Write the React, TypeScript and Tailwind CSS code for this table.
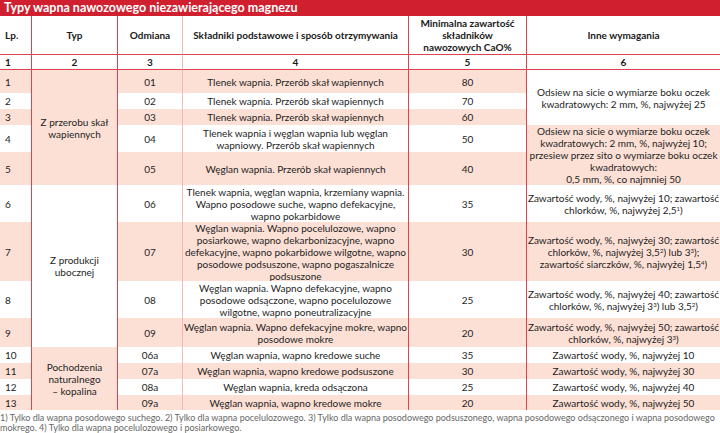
import React from "react";

type Row = { lp: string; odm: string; sk: string[]; min: string };

const rows: Row[] = [
  { lp: "1", odm: "01", sk: ["Tlenek wapnia. Przerób skał wapiennych"], min: "80" },
  { lp: "2", odm: "02", sk: ["Tlenek wapnia. Przerób skał wapiennych"], min: "70" },
  { lp: "3", odm: "03", sk: ["Tlenek wapnia. Przerób skał wapiennych"], min: "60" },
  { lp: "4", odm: "04", sk: ["Tlenek wapnia i węglan wapnia lub węglan", "wapniowy. Przerób skał wapiennych"], min: "50" },
  { lp: "5", odm: "05", sk: ["Węglan wapnia. Przerób skał wapiennych"], min: "40" },
  {
    lp: "6",
    odm: "06",
    sk: ["Tlenek wapnia, węglan wapnia, krzemiany wapnia.", "Wapno posodowe suche, wapno defekacyjne,", "wapno pokarbidowe"],
    min: "35",
  },
  {
    lp: "7",
    odm: "07",
    sk: [
      "Węglan wapnia. Wapno pocelulozowe, wapno",
      "posiarkowe, wapno dekarbonizacyjne, wapno",
      "defekacyjne, wapno pokarbidowe wilgotne, wapno",
      "posodowe podsuszone, wapno pogaszalnicze",
      "podsuszone",
    ],
    min: "30",
  },
  {
    lp: "8",
    odm: "08",
    sk: ["Węglan wapnia. Wapno defekacyjne, wapno", "posodowe odsączone, wapno pocelulozowe", "wilgotne, wapno poneutralizacyjne"],
    min: "25",
  },
  { lp: "9", odm: "09", sk: ["Węglan wapnia. Wapno defekacyjne mokre, wapno", "posodowe mokre"], min: "20" },
  { lp: "10", odm: "06a", sk: ["Węglan wapnia, wapno kredowe suche"], min: "35" },
  { lp: "11", odm: "07a", sk: ["Węglan wapnia, wapno kredowe podsuszone"], min: "30" },
  { lp: "12", odm: "08a", sk: ["Węglan wapnia, kreda odsączona"], min: "25" },
  { lp: "13", odm: "09a", sk: ["Węglan wapnia, wapno kredowe mokre"], min: "20" },
];

// cells of "Typ" keyed by the row where they start
const typ: Record<number, { span: string; bg: string; lines: string[] }> = {
  0: { span: "row-span-5", bg: "bg-[#fce0d5]", lines: ["Z przerobu skał", "wapiennych"] },
  5: { span: "row-span-4", bg: "bg-white", lines: ["Z produkcji", "ubocznej"] },
  9: { span: "row-span-4", bg: "bg-[#fce0d5]", lines: ["Pochodzenia", "naturalnego", "– kopalina"] },
};

const Sup = ({ n }: { n: string }) => <sup className="text-[6px]">{n}</sup>;

const inne: Record<number, { span: string; bg: string; lines: React.ReactNode[] }> = {
  0: {
    span: "row-span-3",
    bg: "bg-white",
    lines: ["Odsiew na sicie o wymiarze boku oczek", "kwadratowych: 2 mm, %, najwyżej 25"],
  },
  3: {
    span: "row-span-2",
    bg: "bg-[#fce0d5]",
    lines: [
      "Odsiew na sicie o wymiarze boku oczek",
      "kwadratowych: 2 mm, %, najwyżej 10;",
      "przesiew przez sito o wymiarze boku oczek",
      "kwadratowych:",
      "0,5 mm, %, co najmniej 50",
    ],
  },
  5: {
    span: "row-span-1",
    bg: "bg-white",
    lines: [
      "Zawartość wody, %, najwyżej 10; zawartość",
      <>chlorków, %, najwyżej 2,5<Sup n="1" />)</>,
    ],
  },
  6: {
    span: "row-span-1",
    bg: "bg-[#fce0d5]",
    lines: [
      "Zawartość wody, %, najwyżej 30; zawartość",
      <>chlorków, %, najwyżej 3,5<Sup n="2" />) lub 3<Sup n="3" />);</>,
      <>zawartość siarczków, %, najwyżej 1,5<Sup n="4" />)</>,
    ],
  },
  7: {
    span: "row-span-1",
    bg: "bg-white",
    lines: [
      "Zawartość wody, %, najwyżej 40; zawartość",
      <>chlorków, %, najwyżej 3<Sup n="3" />) lub 3,5<Sup n="2" />)</>,
    ],
  },
  8: {
    span: "row-span-1",
    bg: "bg-[#fce0d5]",
    lines: [
      "Zawartość wody, %, najwyżej 50; zawartość",
      <>chlorków, %, najwyżej 3<Sup n="3" />)</>,
    ],
  },
  9: { span: "row-span-1", bg: "bg-white", lines: ["Zawartość wody, %, najwyżej 10"] },
  10: { span: "row-span-1", bg: "bg-[#fce0d5]", lines: ["Zawartość wody, %, najwyżej 30"] },
  11: { span: "row-span-1", bg: "bg-white", lines: ["Zawartość wody, %, najwyżej 40"] },
  12: { span: "row-span-1", bg: "bg-[#fce0d5]", lines: ["Zawartość wody, %, najwyżej 50"] },
};

function Lines({ lines }: { lines: React.ReactNode[] }) {
  return (
    <div className="flex flex-col items-center">
      {lines.map((l, i) => (
        <span key={i} className="whitespace-nowrap">
          {l}
        </span>
      ))}
    </div>
  );
}

const red = "border-r border-[#dc4450]";
const light = "border-r border-[#f3b9b9]";

export default function App() {
  return (
    <div className="w-[720px] h-[433px] bg-white overflow-hidden text-[#1e1e1e]" style={{ fontFamily: "Lato, 'Open Sans', sans-serif" }}>
      <div className="h-4 bg-[#d0202f] text-white font-bold text-[12.5px] leading-4 pl-1">
        Typy wapna nawozowego niezawierającego magnezu
      </div>

      <div className="grid grid-cols-[32px_86px_65px_226px_118px_1fr] grid-rows-[39px_15px_23px_16px_16px_27px_33px_37px_59px_37px_29px_16px_16px_16px_15px] text-[10px] leading-[12px]">
        {/* header */}
        <div className={`${red} border-b flex items-center pl-[5px] font-bold text-[#1a1a1a]`}>Lp.</div>
        <div className={`${red} border-b flex items-center justify-center font-bold text-[#1a1a1a]`}>Typ</div>
        <div className={`${light} border-b border-b-[#dc4450] flex items-center justify-center font-bold text-[#1a1a1a]`}>Odmiana</div>
        <div className={`${red} border-b flex items-center justify-center font-bold text-[#1a1a1a]`}>
          Składniki podstawowe i sposób otrzymywania
        </div>
        <div className={`${red} border-b flex items-center justify-center text-center font-bold text-[#1a1a1a]`}>
          <Lines lines={["Minimalna zawartość", "składników", "nawozowych CaO%"]} />
        </div>
        <div className="border-b border-[#dc4450] flex items-center justify-center font-bold text-[#1a1a1a]">Inne wymagania</div>

        {/* column numbers */}
        <div className={`${red} border-b flex items-center pl-[5px] font-bold text-[#1a1a1a]`}>1</div>
        <div className={`${red} border-b flex items-center justify-center font-bold text-[#1a1a1a]`}>2</div>
        <div className={`${light} border-b border-b-[#dc4450] flex items-center justify-center font-bold text-[#1a1a1a]`}>3</div>
        <div className={`${red} border-b flex items-center justify-center font-bold text-[#1a1a1a]`}>4</div>
        <div className={`${red} border-b flex items-center justify-center font-bold text-[#1a1a1a]`}>5</div>
        <div className="border-b border-[#dc4450] flex items-center justify-center font-bold text-[#1a1a1a]">6</div>

        {rows.map((r, i) => {
          const bg = i % 2 === 0 ? "bg-[#fce0d5]" : "bg-white";
          const t = typ[i];
          const n = inne[i];
          return (
            <React.Fragment key={r.lp}>
              <div className={`${red} ${bg} flex items-center pl-[5px]`}>{r.lp}</div>
              {t && (
                <div className={`${red} ${t.bg} ${t.span} flex items-center justify-center text-center`}>
                  <Lines lines={t.lines} />
                </div>
              )}
              <div className={`${light} ${bg} flex items-center justify-center`}>{r.odm}</div>
              <div className={`${red} ${bg} flex items-center justify-center text-center`}>
                <Lines lines={r.sk} />
              </div>
              <div className={`${red} ${bg} flex items-center justify-center`}>{r.min}</div>
              {n && (
                <div className={`${n.bg} ${n.span} flex items-center justify-center text-center`}>
                  <Lines lines={n.lines} />
                </div>
              )}
            </React.Fragment>
          );
        })}
      </div>

      <div className="flex flex-col text-[9px] leading-[10px] text-[#666] pt-[3px]">
        <span className="whitespace-nowrap">
          1) Tylko dla wapna posodowego suchego. 2) Tylko dla wapna pocelulozowego. 3) Tylko dla wapna posodowego podsuszonego, wapna posodowego odsączonego i wapna posodowego
        </span>
        <span className="whitespace-nowrap">mokrego. 4) Tylko dla wapna pocelulozowego i posiarkowego.</span>
      </div>
    </div>
  );
}
